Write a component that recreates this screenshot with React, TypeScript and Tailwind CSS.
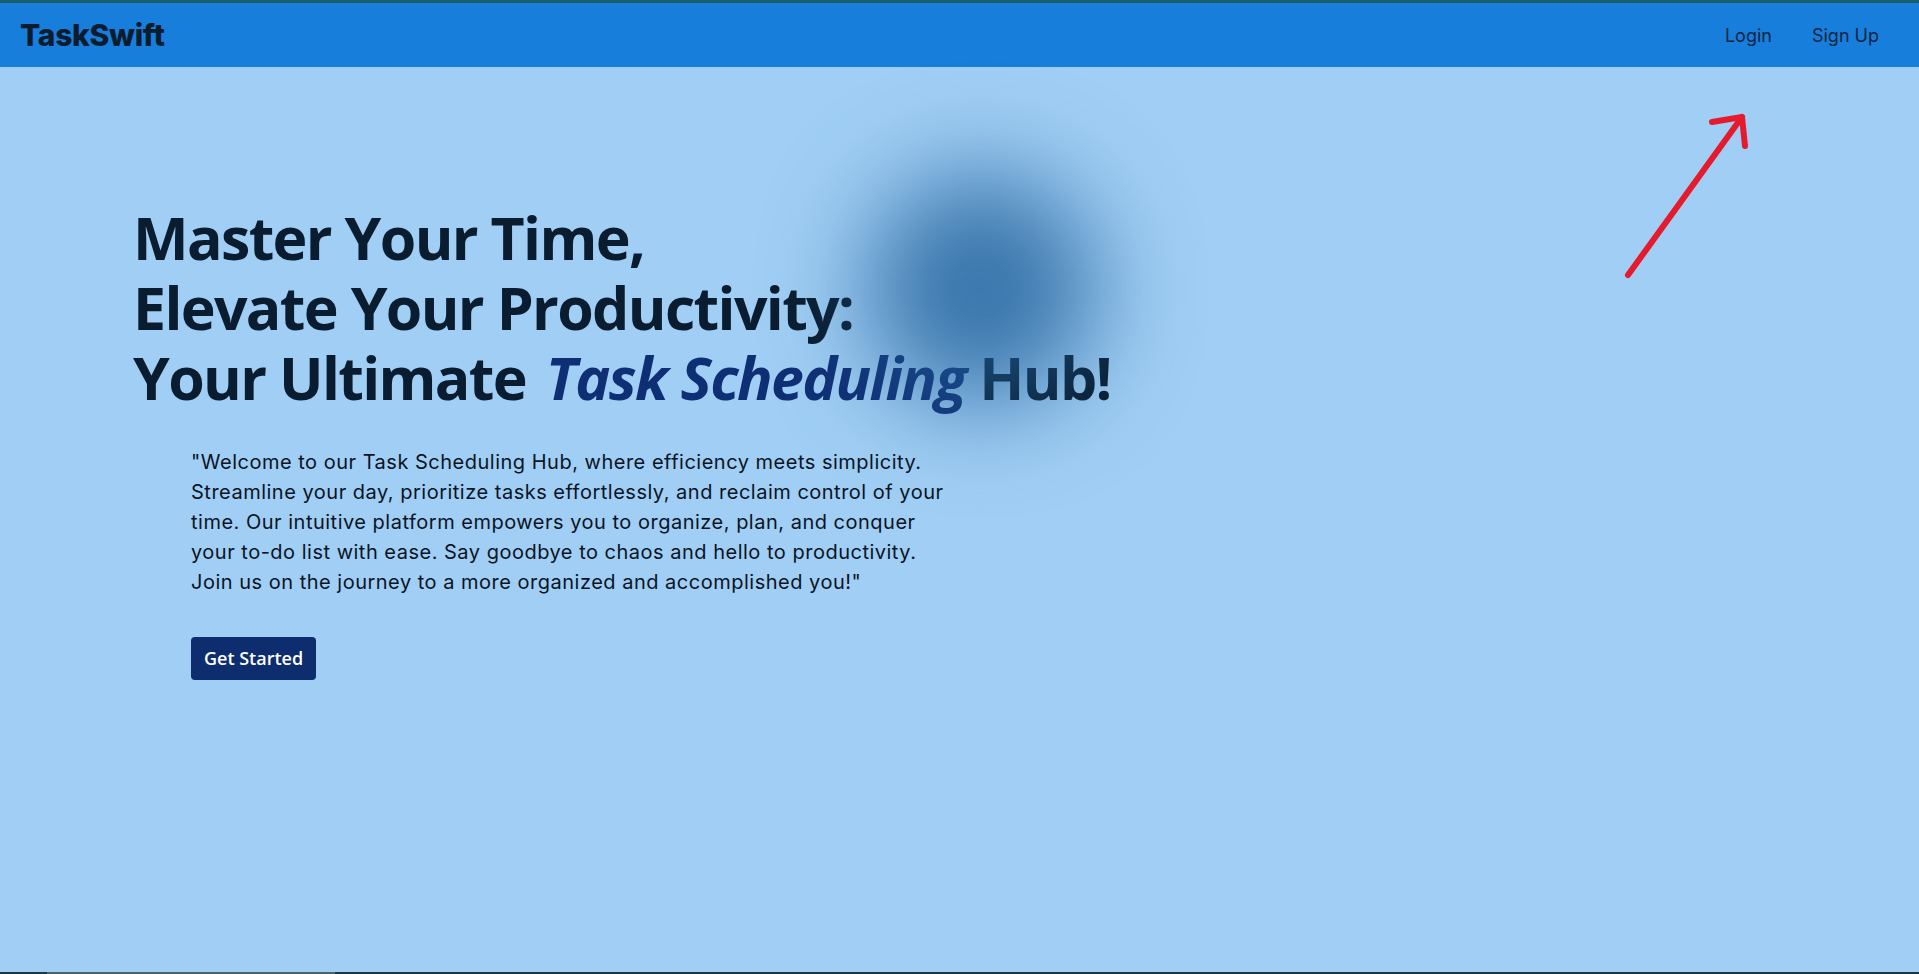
import React from 'react';

function Arrow() {
  return (
    <svg className="absolute left-[1620px] top-[110px] pointer-events-none" width="140" height="175" viewBox="0 0 140 175" fill="none">
      <path d="M8 165 L122 7" stroke="#e51b2d" strokeWidth="6" strokeLinecap="round" />
      <path d="M92 12 L122 7 L125 36" stroke="#e51b2d" strokeWidth="6" strokeLinecap="round" strokeLinejoin="round" />
    </svg>
  );
}

export default function App() {
  return (
    <div className="relative flex min-h-screen flex-col overflow-hidden bg-[#a0cef4] font-['Inter',sans-serif]">
      <nav className="flex h-[67px] items-center justify-between border-t-[3px] border-[#1b5e6b] bg-[#187edb] pl-[20px] pr-[40px]">
        <span className="text-[30px] font-extrabold tracking-[-0.01em] text-[#0b1c2e]">TaskSwift</span>
        <div className="flex items-center gap-[40px] text-[18px] text-[#0d2440]">
          <a href="#">Login</a>
          <a href="#">Sign Up</a>
        </div>
      </nav>

      <main className="flex-1 pl-[133px] pt-[135px]">
        <h1 className="font-['Open_Sans',sans-serif] text-[59px] font-bold leading-[70px] tracking-[-0.028em] text-[#0a1c2f]">
          Master Your Time,
          <br />
          Elevate Your Productivity:
          <br />
          Your Ultimate <em className="ml-[6px] text-[#0f2f74]">Task Scheduling</em> Hub!
        </h1>

        <p className="ml-[58px] mt-[35px] w-[820px] text-[20px] leading-[30px] tracking-[0.025em] text-[#0a1424]">
          "Welcome to our Task Scheduling Hub, where efficiency meets simplicity.
          <br />
          Streamline your day, prioritize tasks effortlessly, and reclaim control of your
          <br />
          time. Our intuitive platform empowers you to organize, plan, and conquer
          <br />
          your to-do list with ease. Say goodbye to chaos and hello to productivity.
          <br />
          Join us on the journey to a more organized and accomplished you!"
        </p>

        <button className="ml-[58px] mt-[40px] h-[43px] rounded-[4px] bg-[#0d2d6f] px-[13px] font-['Open_Sans',sans-serif] text-[18px] font-semibold text-white">
          Get Started
        </button>
      </main>

      <div className="flex h-[2px] bg-[#173a3f]">
        <div className="ml-[47px] w-[288px] bg-[#4f6263]" />
      </div>

      <div className="pointer-events-none absolute left-[866px] top-[174px] h-[230px] w-[230px] rounded-full bg-[#1f5f99]/80 blur-[50px]" />
      <Arrow />
    </div>
  );
}
